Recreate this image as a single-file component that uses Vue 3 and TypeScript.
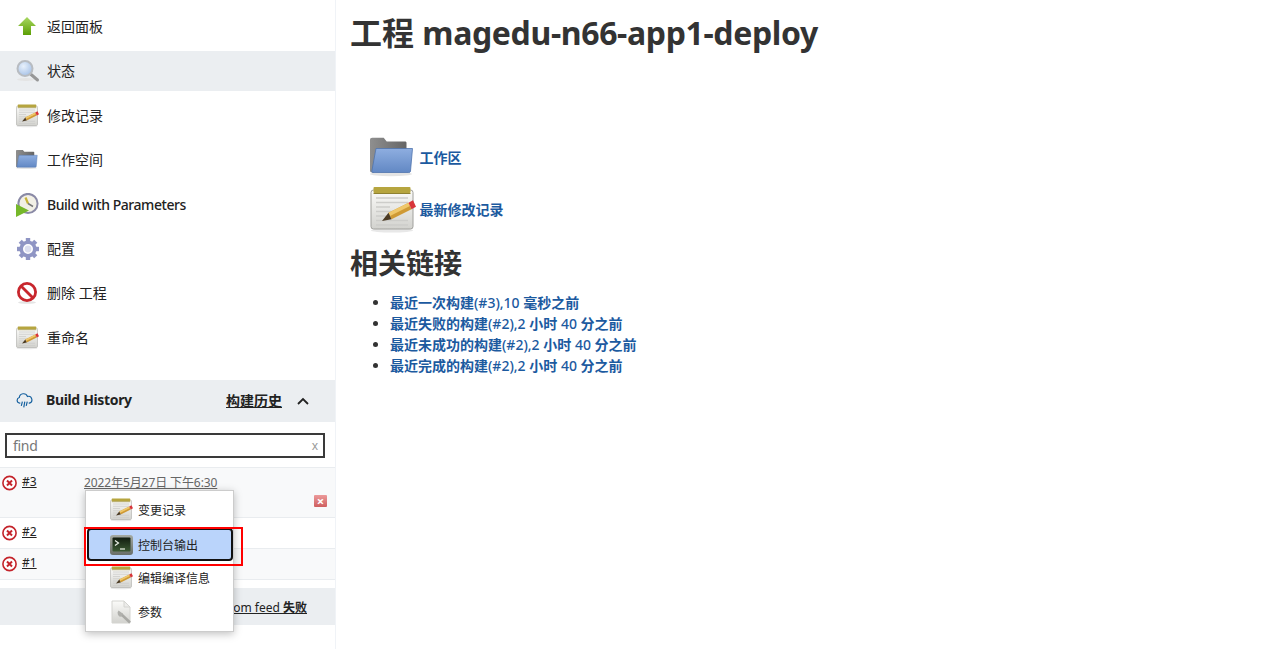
<script setup lang="ts">
interface Item {
  icon: string
  label: string
  active?: boolean
  latin?: boolean
}

const tasks: Item[] = [
  { icon: 'up', label: '返回面板' },
  { icon: 'search', label: '状态', active: true },
  { icon: 'notepad', label: '修改记录' },
  { icon: 'folder', label: '工作空间' },
  { icon: 'clock', label: 'Build with Parameters', latin: true },
  { icon: 'gear', label: '配置' },
  { icon: 'no', label: '删除 工程' },
  { icon: 'notepad', label: '重命名' }
]

const builds = [
  { no: '#3', date: '2022年5月27日 下午6:30', tall: true, odd: true },
  { no: '#2', date: '', tall: false, odd: false },
  { no: '#1', date: '', tall: false, odd: true }
]

const menu: Item[] = [
  { icon: 'notepad', label: '变更记录' },
  { icon: 'terminal', label: '控制台输出', active: true },
  { icon: 'notepad', label: '编辑编译信息' },
  { icon: 'params', label: '参数' }
]

const links = [
  '最近一次构建(#3),10 毫秒之前',
  '最近失败的构建(#2),2 小时 40 分之前',
  '最近未成功的构建(#2),2 小时 40 分之前',
  '最近完成的构建(#2),2 小时 40 分之前'
]

// 中文加粗，数字和符号用常规字重
function runs(text: string) {
  return text.split(/([^\u4e00-\u9fa5]+)/).filter(Boolean)
}

function isCjk(run: string) {
  return /[\u4e00-\u9fa5]/.test(run)
}

const gearTeeth = [0, 45, 90, 135, 180, 225, 270, 315]
</script>

<template>
  <svg class="sprite" width="0" height="0" aria-hidden="true">
    <defs>
      <linearGradient id="g-up" x1="0" y1="0" x2="0" y2="1">
        <stop offset="0" stop-color="#a9d862" />
        <stop offset="1" stop-color="#5c9f05" />
      </linearGradient>
      <linearGradient id="g-folder" x1="0" y1="0" x2="0" y2="1">
        <stop offset="0" stop-color="#8eaee0" />
        <stop offset="1" stop-color="#6288c4" />
      </linearGradient>
      <linearGradient id="g-grey" x1="0" y1="0" x2="1" y2="0">
        <stop offset="0" stop-color="#8f8f8f" />
        <stop offset="1" stop-color="#666" />
      </linearGradient>
      <linearGradient id="g-paper" x1="0" y1="0" x2="0" y2="1">
        <stop offset="0" stop-color="#fbfbf9" />
        <stop offset="1" stop-color="#d2d2ce" />
      </linearGradient>
      <radialGradient id="g-glass" cx="0.4" cy="0.35" r="0.7">
        <stop offset="0" stop-color="#e8f1fc" />
        <stop offset="1" stop-color="#a4c0e6" />
      </radialGradient>
      <linearGradient id="g-screen" x1="0" y1="0" x2="0" y2="1">
        <stop offset="0" stop-color="#111c10" />
        <stop offset="1" stop-color="#3c5a34" />
      </linearGradient>
      <linearGradient id="g-monitor" x1="0" y1="0" x2="0" y2="1">
        <stop offset="0" stop-color="#a4aaa2" />
        <stop offset="1" stop-color="#686e68" />
      </linearGradient>
    </defs>

    <symbol id="i-up" viewBox="0 0 24 24">
      <path d="M11 2 20 11h-5v9H7v-9H2z" fill="url(#g-up)" />
    </symbol>
    <symbol id="i-search" viewBox="0 0 24 24">
      <ellipse cx="10" cy="20.500" rx="9" ry="1.500" fill="#e4e4e4" />
      <path d="m14.500 15 7 6" stroke="#979797" stroke-width="3" stroke-linecap="round" />
      <circle cx="9" cy="9.500" r="7.500" fill="url(#g-glass)" stroke="#b8bcc1" stroke-width="2" />
    </symbol>
    <symbol id="i-notepad" viewBox="0 0 48 48">
      <ellipse cx="22" cy="44.500" rx="21" ry="2" fill="#e8e8e8" />
      <rect x="1" y="4" width="42" height="39" rx="2.500" fill="url(#g-paper)" stroke="#a0a09c" />
      <rect x="3.500" y="1" width="37" height="6" rx="1" fill="#b6a53f" />
      <path d="M3.500 7.500h37" stroke="#8f8232" stroke-width="1" />
      <path d="M6 12h32M6 16.500h32M6 21h14M6 25.500h26M6 30h14M6 34.500h32M6 39h32" stroke="#cdcdca" stroke-width="1.600" />
      <path d="M18.500 26.800 38.500 16.800 41.500 23.200 21.500 33.200z" fill="#cf9a35" />
      <path d="M18.500 26.800 38.500 16.800 40 20 20 30z" fill="#efc76a" />
      <path d="M18.500 26.800 21.500 33.200 12 35z" fill="#4c3b24" />
      <path d="M38.500 16.800 43 14.300 46 20.700 41.500 23.200z" fill="#d8353a" />
    </symbol>
    <symbol id="i-folder" viewBox="0 0 48 48">
      <ellipse cx="21" cy="40" rx="21" ry="2.200" fill="#e4e4e4" />
      <path d="M0 6c0-1.500.8-2.200 2.200-2.200h11.500l3 3.700H35c1 0 1.500.5 1.500 1.500V16H6L4 38.500H2c-1.300 0-2-.7-2-2z" fill="url(#g-grey)" />
      <path d="M6 14.500h36.500L40.500 37c0 1-.7 1.500-1.700 1.500H3c-.8 0-1.200-.4-1.200-1.200z" fill="url(#g-folder)" stroke="#4f74ad" stroke-width=".8" />
    </symbol>
    <symbol id="i-clock" viewBox="0 0 24 24">
      <circle cx="12" cy="10.500" r="9.600" fill="#f2f0e6" stroke="#8a8aa6" stroke-width="2" />
      <path d="M12 10.500 9.500 4.500" stroke="#c7b33a" stroke-width="2.200" />
      <path d="m12 10.500 5 3" stroke="#777" stroke-width="1.500" />
      <path d="M0 11 13 17.500 0 24z" fill="#76b82a" />
    </symbol>
    <symbol id="i-gear" viewBox="0 0 24 24">
      <rect
        v-for="a in gearTeeth"
        :key="a"
        x="9.800"
        y="1"
        width="4.400"
        height="5"
        fill="#8f95c4"
        :transform="`rotate(${a} 12 12)`"
      />
      <circle cx="12" cy="12" r="6.800" fill="none" stroke="#8f95c4" stroke-width="3.600" />
      <circle cx="12" cy="12" r="3.400" fill="#dcdff0" />
    </symbol>
    <symbol id="i-no" viewBox="0 0 24 24">
      <ellipse cx="11" cy="21.500" rx="9" ry="1.300" fill="#e4e4e4" />
      <circle cx="11" cy="11" r="8.600" fill="#fff" stroke="#c8262d" stroke-width="2.800" />
      <path d="m5 5 12 12" stroke="#c8262d" stroke-width="2.800" />
    </symbol>
    <symbol id="i-terminal" viewBox="0 0 24 24">
      <rect x="0" y="2" width="23" height="20" rx="3" fill="url(#g-monitor)" />
      <rect x="2.500" y="4.500" width="18" height="14" rx="1" fill="url(#g-screen)" />
      <path d="m5 7.500 3.500 2.500L5 12.500" fill="none" stroke="#eef3ea" stroke-width="1.200" />
      <path d="M10 16h5" stroke="#eef3ea" stroke-width="1.200" />
    </symbol>
    <symbol id="i-params" viewBox="0 0 24 24">
      <path d="M2 1h12l6 6v16H2z" fill="url(#g-paper)" stroke="#d4d4d0" />
      <path d="M14 1v6h6z" fill="#ececea" stroke="#d4d4d0" />
      <path d="m11 14 9 8.500" stroke="#a9a9a5" stroke-width="2.600" />
      <path d="M8.500 10.500a3.800 3.800 0 0 0 3 6.300l1.500-3z" fill="#b0b0ac" />
    </symbol>
    <symbol id="i-error" viewBox="0 0 16 16">
      <circle cx="8.500" cy="8" r="6.600" fill="#fff" stroke="#c4242b" stroke-width="1.600" />
      <path d="m6 5.500 5 5m0-5-5 5" stroke="#c4242b" stroke-width="2" />
    </symbol>
  </svg>

  <div class="page">
    <aside class="side">
      <nav class="tasks">
        <a
          v-for="t in tasks"
          :key="t.label + t.icon"
          class="task"
          :class="{ active: t.active, latin: t.latin }"
        >
          <svg class="task-icon"><use :href="'#i-' + t.icon" /></svg>
          <span>{{ t.label }}</span>
        </a>
      </nav>

      <section class="history">
        <header class="hist-head">
          <svg class="rain" viewBox="0 0 16 16" fill="none" stroke="#15609f" stroke-width="1.100">
            <path d="M4 10.500H3.500a2.700 2.700 0 0 1-.4-5.300 4 4 0 0 1 7.700-1 3.200 3.200 0 0 1 1.700 6.300H12" />
            <path d="M6 9 5 13M8.300 9l-1 5.500M10.600 9l-1 4" />
          </svg>
          <span class="hist-title">Build History</span>
          <a class="hist-link">构建历史</a>
          <svg class="chevron" viewBox="0 0 12 8" fill="none" stroke="#222" stroke-width="1.800">
            <path d="m1 7 5-5 5 5" />
          </svg>
        </header>

        <div class="search">
          <div class="search-box">
            <span class="find">find</span>
            <span class="clear">x</span>
          </div>
        </div>

        <div class="builds">
          <div
            v-for="b in builds"
            :key="b.no"
            class="build"
            :class="{ tall: b.tall, odd: b.odd }"
          >
            <svg class="err"><use href="#i-error" /></svg>
            <a class="build-no">{{ b.no }}</a>
            <a v-if="b.date" class="build-date">{{ b.date }}</a>
            <span v-if="b.tall" class="build-del">×</span>
          </div>
        </div>

        <footer class="feed">
          <a>Atom feed <span class="feed-state">失败</span></a>
        </footer>
      </section>

      <div class="popup">
        <a v-for="m in menu" :key="m.label" class="menu-item" :class="{ selected: m.active }">
          <svg class="menu-icon"><use :href="'#i-' + m.icon" /></svg>
          <span>{{ m.label }}</span>
        </a>
      </div>
      <div class="red-mark"></div>
    </aside>

    <main class="main">
      <h1>工程 <span class="job">magedu-n66-app1-deploy</span></h1>

      <div class="perma">
        <a class="perma-row">
          <svg class="perma-icon"><use href="#i-folder" /></svg>
          <span>工作区</span>
        </a>
        <a class="perma-row">
          <svg class="perma-icon"><use href="#i-notepad" /></svg>
          <span>最新修改记录</span>
        </a>
      </div>

      <h2>相关链接</h2>
      <ul class="links">
        <li v-for="l in links" :key="l">
          <a><span v-for="(r, i) in runs(l)" :key="i" :class="isCjk(r) ? 'cjk' : 'plain'">{{ r }}</span></a>
        </li>
      </ul>
    </main>
  </div>
</template>

<style>
html,
body {
  margin: 0;
  background: #fff;
  overflow: hidden;
}
</style>

<style scoped>
.sprite {
  position: absolute;
}

.page {
  display: flex;
  height: 649px;
  overflow: hidden;
  font-family: "Noto Sans", "Noto Sans CJK SC", sans-serif;
  font-size: 14px;
  color: #333;
}

.side {
  position: relative;
  width: 335px;
  flex: none;
  border-right: 1px solid #f0f3f7;
}

.tasks {
  display: flex;
  flex-direction: column;
  gap: 4.4px;
  padding-top: 7px;
}

.task {
  display: flex;
  align-items: center;
  height: 40px;
  padding-left: 16px;
  color: #222;
}

.task span {
  margin-bottom: 2px;
}

.task.active {
  background: #ebeef1;
}

.task.latin {
  font-weight: 500;
  letter-spacing: -0.45px;
}

.task.latin span {
  margin-bottom: 0;
}

.task-icon {
  width: 24px;
  height: 24px;
  margin-right: 7px;
}

.history {
  margin-top: 22px;
}

.hist-head {
  display: flex;
  align-items: center;
  height: 42px;
  padding-left: 16px;
  background: #ebeef1;
  color: #222;
}

.rain {
  width: 17px;
  height: 17px;
  margin-right: 13px;
}

.hist-title {
  font-weight: 700;
  letter-spacing: -0.35px;
  margin-bottom: 2px;
}

.hist-link {
  margin-left: auto;
  margin-bottom: 2px;
  font-weight: 700;
  text-decoration: underline;
}

.chevron {
  width: 12px;
  height: 8px;
  margin: 0 26px 0 15px;
}

.search {
  padding: 11px 10px 9px 5px;
  border-bottom: 1px solid #e9ecef;
}

.search-box {
  display: flex;
  justify-content: space-between;
  align-items: center;
  height: 25px;
  box-sizing: border-box;
  padding: 0 5px 0 6px;
  border: 2px solid #3a3a3a;
  color: #777;
}

.find {
  letter-spacing: -0.3px;
}

.clear {
  font-size: 12px;
  color: #999;
}

.build {
  position: relative;
  display: flex;
  height: 31px;
  padding: 5px 0 0 1px;
  box-sizing: border-box;
  border-bottom: 1px solid #e9ecef;
  font-size: 12px;
  color: #222;
}

.build.tall {
  height: 50px;
}

.build.odd {
  background: #f8f9fa;
}

.err {
  width: 16px;
  height: 16px;
  margin: 2px 5px 0 0;
  flex: none;
}

.build-no {
  width: 62px;
  text-decoration: underline;
}

.build-date {
  color: #666;
  letter-spacing: -0.1px;
  text-decoration: underline;
}

.build-del {
  position: absolute;
  left: 314px;
  top: 27px;
  width: 13px;
  height: 12px;
  border-radius: 1px;
  background: linear-gradient(#ec9a9a, #cf5f5f);
  color: #fff;
  font-size: 13px;
  font-weight: 700;
  line-height: 12px;
  text-align: center;
}

.feed {
  display: flex;
  justify-content: flex-end;
  align-items: center;
  height: 37px;
  margin-top: 8px;
  padding-right: 28px;
  background: #ebeef1;
  font-size: 12px;
  color: #222;
}

.feed a {
  text-decoration: underline;
  position: relative;
  top: 1px;
}

.feed-state {
  font-weight: 700;
}

.popup {
  position: absolute;
  left: 85px;
  top: 490px;
  width: 149px;
  height: 142px;
  padding-top: 2px;
  box-sizing: border-box;
  background: #fff;
  border: 1px solid #ccc;
  box-shadow: 0 2px 8px rgba(0, 0, 0, 0.25);
  font-size: 12px;
  color: #222;
}

.menu-item {
  display: flex;
  align-items: center;
  height: 34px;
  padding-left: 24px;
  box-sizing: border-box;
}

.menu-item.selected {
  margin: 1px 0 0 1px;
  padding-left: 21px;
  width: 146px;
  height: 33px;
  background: #bad4fb;
  border: 2px solid #111;
  border-radius: 4px;
}

.menu-icon {
  width: 24px;
  height: 24px;
  margin-right: 4px;
}

.red-mark {
  position: absolute;
  left: 84px;
  top: 527px;
  width: 159px;
  height: 39px;
  box-sizing: border-box;
  border: 2px solid #f00;
}

.main {
  flex: 1;
  padding-left: 14px;
}

h1 {
  margin: 10px 0 0;
  font-size: 32px;
  line-height: 46px;
  font-weight: 700;
  color: #333;
}

.job {
  letter-spacing: -0.36px;
}

.perma {
  display: flex;
  flex-direction: column;
  gap: 4px;
  margin: 77px 0 0 20px;
}

.perma-row {
  display: flex;
  align-items: center;
  height: 48px;
  color: #1c5a9f;
  font-weight: 700;
}

.perma-icon {
  width: 48px;
  height: 48px;
  margin: 2px 1.5px 0 0;
}

h2 {
  margin: 10px 0 0;
  font-size: 28px;
  line-height: 40px;
  font-weight: 700;
  color: #333;
}

.links {
  margin: 9px 0 0;
  padding-left: 40px;
  line-height: 21px;
  color: #1c5a9f;
}

.links li::marker {
  color: #333;
}

.cjk {
  font-weight: 700;
}

.plain {
  font-weight: 500;
}
</style>
